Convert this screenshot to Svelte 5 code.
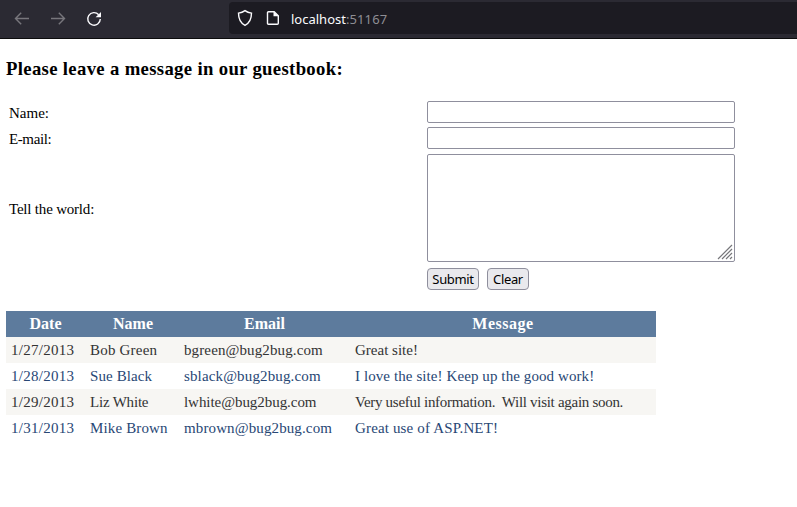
<script>
  // Each cell holds its text and its tracking in pixels.
  const entries = [
    [['1/27/2013', 0.28], ['Bob Green', 0.2], ['bgreen@bug2bug.com', 0.12], ['Great site!', 0]],
    [['1/28/2013', 0.28], ['Sue Black', 0.1], ['sblack@bug2bug.com', 0.14], ['I love the site! Keep up the good work!', 0.09]],
    [['1/29/2013', 0.28], ['Liz White', -0.2], ['lwhite@bug2bug.com', -0.05], ['Very useful information.\u00a0 Will visit again soon.', -0.29]],
    [['1/31/2013', 0.28], ['Mike Brown', 0.15], ['mbrown@bug2bug.com', 0.12], ['Great use of ASP.NET!', 0.15]]
  ];
</script>

<header class="toolbar">
  <nav>
    <svg class="dim" width="16" height="16" viewBox="0 0 16 16"><path d="M15 7.5H1.5M7.2 1.8 1.5 7.5l5.7 5.7" /></svg>
    <svg class="dim" width="16" height="16" viewBox="0 0 16 16"><path d="M1 7.5h13.5M8.8 1.8l5.7 5.7-5.7 5.7" /></svg>
    <svg class="bright" width="16" height="16" viewBox="0 0 16 16"><path d="M12.7 3.7A6.3 6.3 0 1 0 14.3 8" /><path class="solid" d="M15 1v5.2H9.6z" /></svg>
  </nav>
  <div class="address">
    <svg class="bright" width="16" height="18" viewBox="0 0 16 18"><path d="M8 1.6c2 1.5 4.1 2.2 6.5 2.5 0 5.4-1.2 9.7-6.5 12.3C2.7 13.8 1.5 9.5 1.5 4.1 3.9 3.8 6 3.1 8 1.6z" /></svg>
    <svg class="bright page" width="14" height="16" viewBox="0 0 14 16"><path d="M2.5 1.7h5.7l4.1 4.2v7.4q0 1-1 1H2.5q-1 0-1-1V2.7q0-1 1-1z" /><path class="solid" d="M7.5 1.3v5h5.2z" /></svg>
    <span class="url">localhost<span class="port">:51167</span></span>
  </div>
</header>

<main>
  <h3>Please leave a message in our guestbook:</h3>
  <form onsubmit={(e) => e.preventDefault()}>
    <label for="name">Name:</label>
    <input id="name" type="text" />
    <label for="email" class="mail">E-mail:</label>
    <input id="email" type="text" />
    <label for="message" class="world">Tell the world:</label>
    <div class="area">
      <textarea id="message"></textarea>
      <svg class="grip" width="16" height="16" viewBox="0 0 16 16"><path d="M1 15 15 1M5 15 15 5M9 15l6-6M13 15l2-2" /></svg>
    </div>
    <div class="actions">
      <button type="submit">Submit</button>
      <button class="clear" type="reset">Clear</button>
    </div>
  </form>

  <table>
    <colgroup><col class="c1" /><col class="c2" /><col class="c3" /><col class="c4" /></colgroup>
    <thead><tr><th>Date</th><th class="name">Name</th><th>Email</th><th class="message">Message</th></tr></thead>
    <tbody>
      {#each entries as row}
        <tr>
          {#each row as [text, tracking]}
            <td style:letter-spacing={`${tracking}px`}>{text}</td>
          {/each}
        </tr>
      {/each}
    </tbody>
  </table>
</main>

<style>
  :global(body) { margin: 0; background: #fff; overflow: hidden; }
  .toolbar { box-sizing: border-box; height: 39px; display: flex; background: #2b2a33; border-bottom: 1px solid #0c0c0d; }
  nav { box-sizing: border-box; width: 229px; padding: 11px 0 0 14px; display: flex; gap: 20px; }
  svg { display: block; flex: none; fill: none; stroke-width: 1.4; }
  .dim { stroke: #77767c; }
  .bright { stroke: #fbfbfe; }
  .solid { fill: #fbfbfe; stroke: none; }
  .address { flex: 1; height: 32px; margin-top: 2px; border-radius: 4px 0 0 4px; background: #1c1b22; display: flex; align-items: center; padding-left: 8px; }
  .page { margin-left: 13px; }
  .url { margin-left: 11px; padding-top: 2px; font: 13px/18px "Noto Sans", "Open Sans", sans-serif; color: #fbfbfe; white-space: nowrap; }
  .port { color: #8f8e94; letter-spacing: 0.1px; }
  main { padding: 19px 6px 0; font: 16px/22px "Liberation Serif", "Times New Roman", serif; color: #000; }
  h3 { margin: 0; font-size: 18.72px; line-height: 22px; letter-spacing: 0.33px; }
  form { margin-top: 21px; padding-left: 3px; display: grid; grid-template-columns: 418px 308px; grid-template-rows: 22px 22px 108px 22px; row-gap: 4px; font-size: 15px; }
  label { padding-top: 1px; }
  .mail { letter-spacing: -0.4px; }
  .world { padding-top: 45px; letter-spacing: -0.2px; }
  input, textarea { box-sizing: border-box; width: 308px; margin: 0; padding: 2px; border: 1px solid #8f8f9d; border-radius: 2px; background: #fff; outline: none; }
  input { height: 22px; }
  textarea { display: block; height: 108px; resize: none; }
  .area { position: relative; margin-top: 1px; height: 108px; }
  .grip { position: absolute; right: 2px; bottom: 2px; stroke: #77777b; stroke-width: 1.2; }
  .actions { grid-column: 2; display: flex; gap: 8px; margin-top: 3px; }
  button { box-sizing: border-box; width: 52px; height: 22px; padding: 0; border: 1px solid #8f8f9d; border-radius: 4px; background: #e9e9ed; color: #000; font: 13px/20px "Noto Sans", "Open Sans", sans-serif; letter-spacing: -0.35px; }
  .clear { width: 42px; }
  table { width: 650px; margin-top: 24px; border-collapse: collapse; table-layout: fixed; font-size: 15px; line-height: 18px; }
  .c1 { width: 79px; }
  .c2 { width: 94px; }
  .c3 { width: 171px; }
  .c4 { width: 306px; }
  th, td { height: 18px; padding: 4px; white-space: nowrap; }
  td { text-align: left; padding-left: 5px; padding-right: 0; }
  th { color: #fff; background: #5d7b9d; font-weight: bold; font-size: 16px; }
  .name { padding-left: 6px; }
  .message { letter-spacing: 0.5px; }
  tbody tr { background: #f7f6f3; color: #333; }
  tbody tr:nth-child(even) { background: #fff; color: #284775; }
</style>
